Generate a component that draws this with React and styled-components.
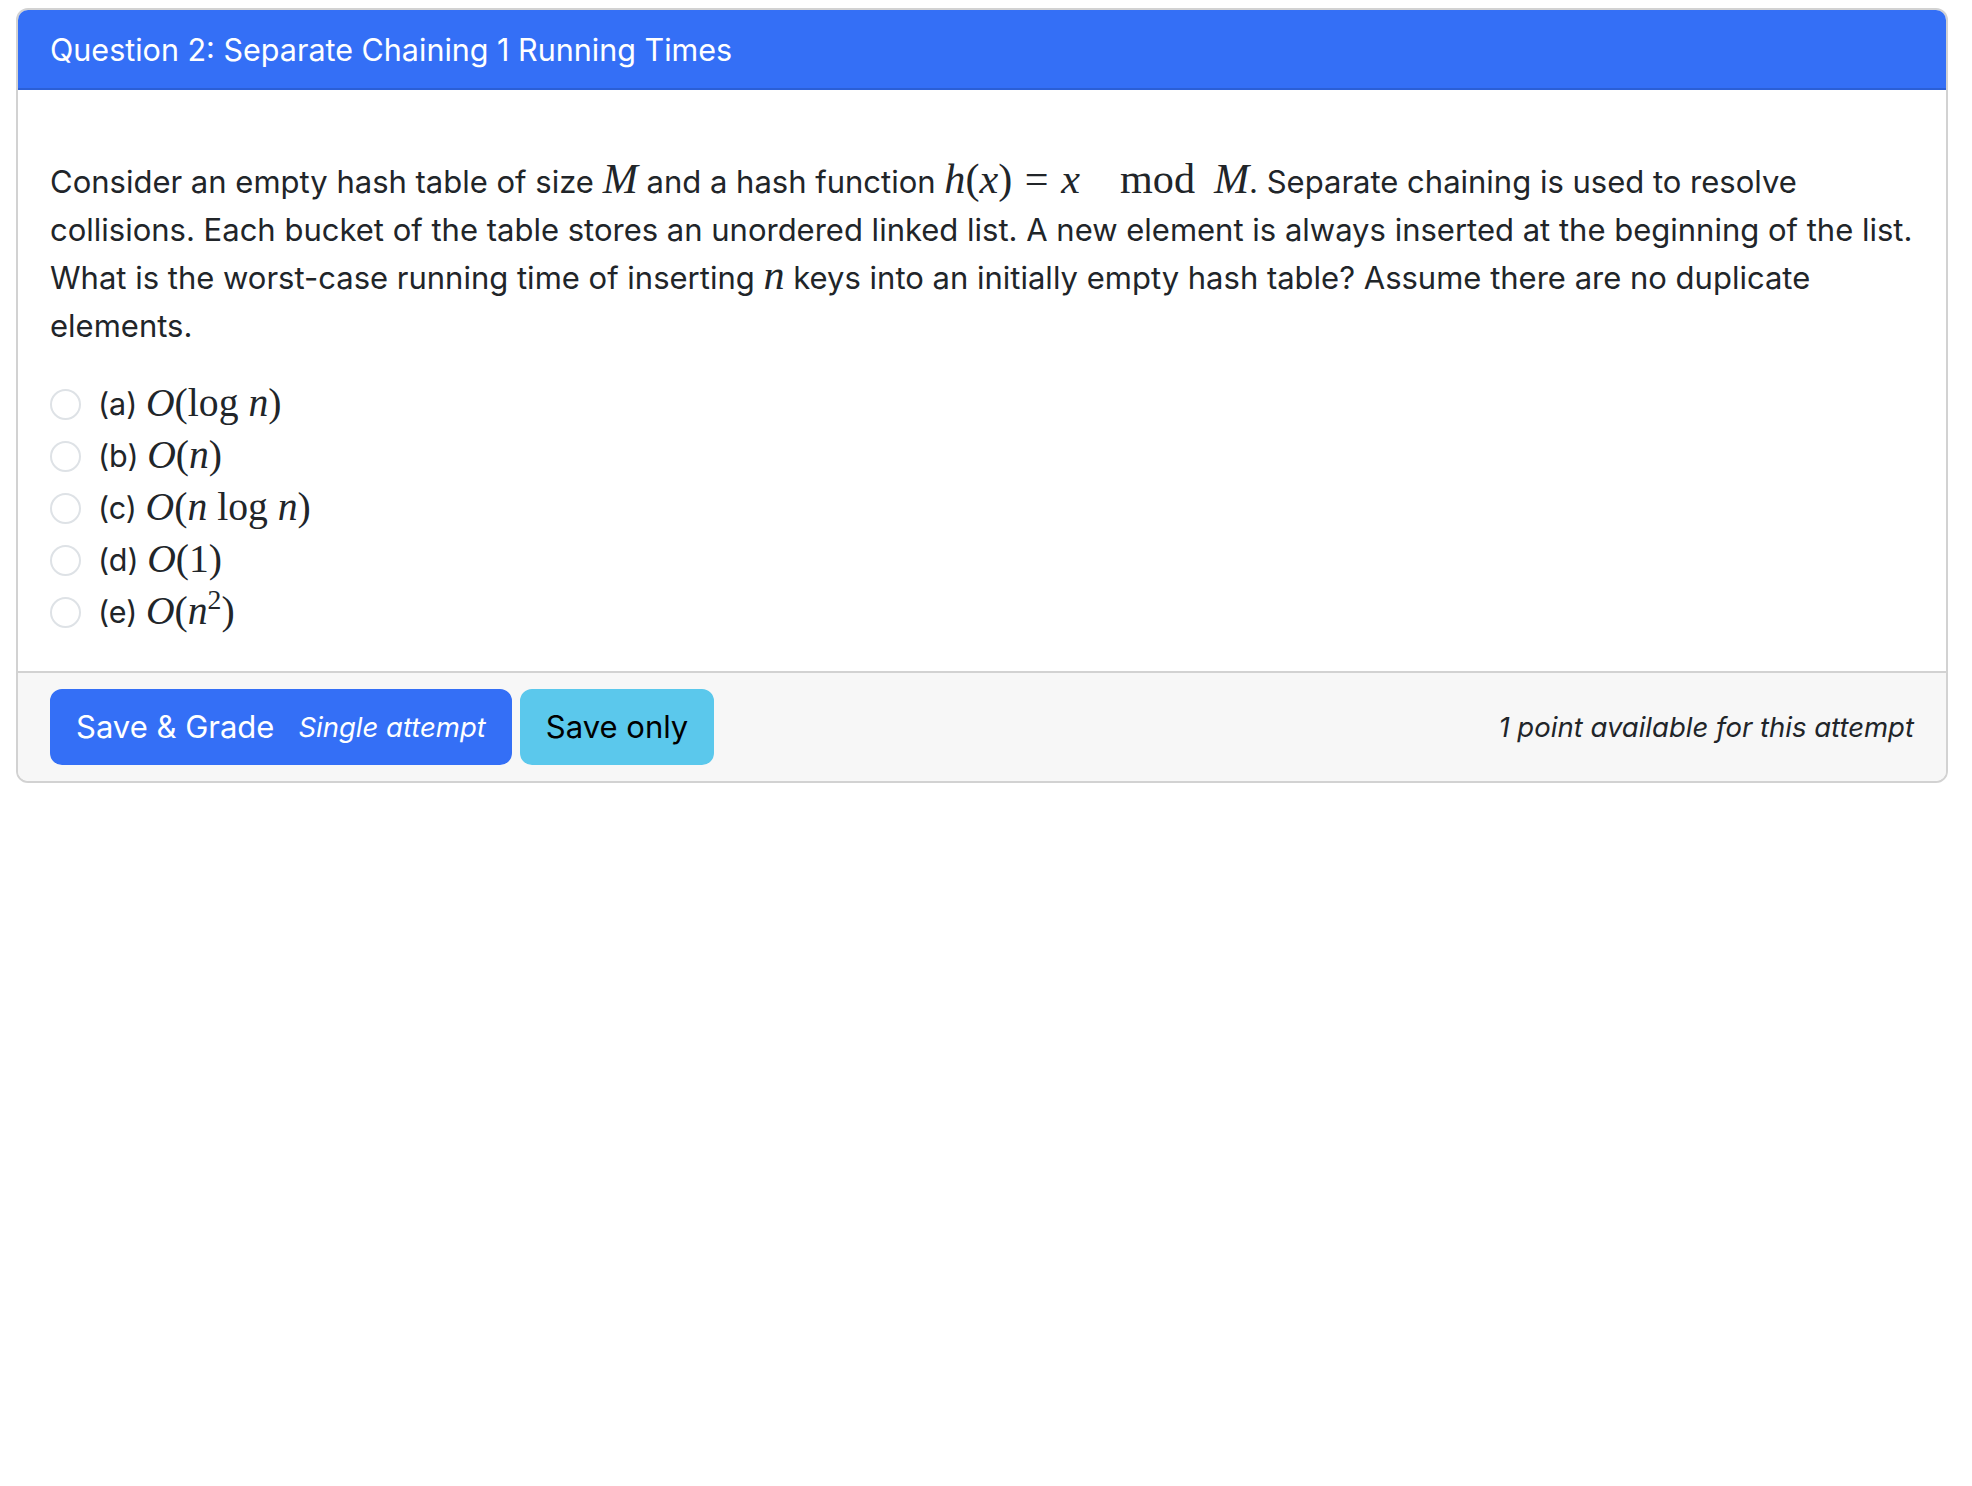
import React from "react";
import styled, { createGlobalStyle } from "styled-components";

const GlobalStyle = createGlobalStyle`
  body {
    margin: 0;
    background: #fff;
    font-family: Inter, "Noto Sans", sans-serif;
    color: #212529;
  }
`;

const Page = styled.div`
  padding: 8px 24px 0 16px;
`;

const Card = styled.div`
  border: 2px solid #d2d2d2;
  border-radius: 12px;
  overflow: hidden;
  background: #fff;
`;

const Header = styled.div`
  background: #346ff6;
  color: #fff;
  font-size: 30.5px;
  line-height: 48px;
  padding: 16px 32px 14px;
  border-bottom: 2px solid #2b5fd6;
`;

const Body = styled.div`
  padding: 68px 32px 31px;
`;

const Prompt = styled.p`
  margin: 0 0 30px;
  font-size: 31px;
  line-height: 48px;
`;

const Math = styled.span`
  font-family: "Liberation Serif", "DejaVu Serif", serif;
  font-size: ${(p) => p.$scale || "1.3em"};
  line-height: 1;
  white-space: nowrap;
`;

const V = styled.i`
  font-style: italic;
`;

const Op = styled.span`
  margin: ${(p) => p.$space || "0 0.2em"};
`;

const Sup = styled.sup`
  font-size: 0.7em;
  vertical-align: 0.55em;
  line-height: 0;
`;

const Options = styled.div`
  display: flex;
  flex-direction: column;
`;

const Option = styled.label`
  display: flex;
  align-items: center;
  min-height: 48px;
  margin-bottom: 4px;
  font-size: 30.5px;
  line-height: 48px;
`;

const Radio = styled.span`
  box-sizing: border-box;
  width: 31px;
  height: 31px;
  border: 2px solid #dee2e6;
  border-radius: 50%;
  margin: 0 17px 0 0;
  flex: none;
`;

const Footer = styled.div`
  background: #f7f7f7;
  border-top: 2px solid #d2d2d2;
  padding: 16px 32px;
  display: flex;
  align-items: center;
  justify-content: space-between;
`;

const Buttons = styled.div`
  display: flex;
  gap: 8px;
`;

const Button = styled.button`
  font-family: Inter, "Noto Sans", sans-serif;
  font-size: 31px;
  line-height: 48px;
  padding: 12px 24px;
  border: 2px solid ${(p) => (p.$variant === "info" ? "#5bc8ec" : "#346ff6")};
  background: ${(p) => (p.$variant === "info" ? "#5bc8ec" : "#346ff6")};
  color: ${(p) => (p.$variant === "info" ? "#000" : "#fff")};
  border-radius: 12px;
  display: flex;
  align-items: center;
`;

const Small = styled.small`
  font-size: 27.5px;
  font-style: italic;
  margin-left: 24px;
`;

const Note = styled.small`
  font-size: 27.5px;
  font-style: italic;
  color: #212529;
`;

const choices = [
  ["(a)", <><V>O</V>(log <V>n</V>)</>],
  ["(b)", <><V>O</V>(<V>n</V>)</>],
  ["(c)", <><V>O</V>(<V>n</V> log <V>n</V>)</>],
  ["(d)", <><V>O</V>(1)</>],
  ["(e)", <><V>O</V>(<V>n</V><Sup>2</Sup>)</>],
];

export default function App() {
  return (
    <Page>
      <GlobalStyle />
      <Card>
        <Header>Question 2: Separate Chaining 1 Running Times</Header>
        <Body>
          <Prompt>
            Consider an empty hash table of size{" "}
            <Math $scale="1.36em"><V>M</V></Math> and a hash function{" "}
            <Math $scale="1.36em">
              <V>h</V>(<V>x</V>)<Op $space="0 0.3em">=</Op><V>x</V>
              <Op $space="0 0.45em 0 0.95em">mod</Op>
              <V>M</V>
            </Math>
            . Separate chaining is used to resolve collisions. Each bucket of
            the table stores an unordered linked list. A new element is always
            inserted at the beginning of the list. What is the worst-case
            running time of inserting <Math $scale="1.36em"><V>n</V></Math>{" "}
            keys into an initially empty hash table? Assume there are no
            duplicate elements.
          </Prompt>
          <Options>
            {choices.map(([key, expr]) => (
              <Option key={key}>
                <Radio />
                {key}&nbsp;<Math>{expr}</Math>
              </Option>
            ))}
          </Options>
        </Body>
        <Footer>
          <Buttons>
            <Button>
              Save &amp; Grade <Small>Single attempt</Small>
            </Button>
            <Button $variant="info">Save only</Button>
          </Buttons>
          <Note>1 point available for this attempt</Note>
        </Footer>
      </Card>
    </Page>
  );
}
